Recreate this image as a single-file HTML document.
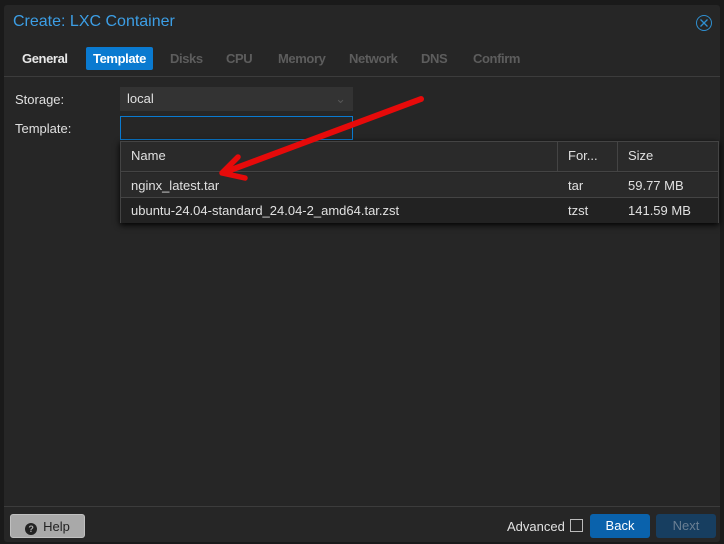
<!DOCTYPE html>
<html><head><style>
*{box-sizing:border-box;margin:0;padding:0}
body{width:724px;height:544px;background:#1a1a1a;font-family:"Liberation Sans",sans-serif;font-size:13px;color:#e0e0e0;position:relative;overflow:hidden}
.dlg{position:absolute;left:4px;top:5px;width:716px;height:537px;background:#262626;border-radius:3px}
.title{position:absolute;left:9px;top:8px;color:#3c9ee5;font-size:16px}
.close{position:absolute;left:692px;top:10px;width:16px;height:16px;border:1.3px solid #2f8fd0;border-radius:50%}
.tab{position:absolute;top:42px;height:23px;line-height:23px;padding:0 8px;color:#5d5d5d;font-weight:bold;font-size:13px;letter-spacing:-0.4px}
.panel{position:absolute;left:0;top:71px;width:716px;height:431px;border-top:1px solid #3c3c3c;border-bottom:1px solid #3c3c3c}
.lbl{position:absolute;left:11px;color:#e0e0e0}
.field{position:absolute;left:116px;width:233px;height:24px;background:#333;}
.grid{position:absolute;left:116px;top:136px;width:599px;height:82px;background:#262626;border:1px solid #444;box-shadow:0 2px 6px #000}
.row{position:absolute;left:0;width:597px;height:25px;line-height:25px}
.btn{position:absolute;top:509px;height:24px;line-height:24px;text-align:center;border-radius:3px;font-size:13px}
</style></head><body>
<div class="dlg">
<div class="title">Create: LXC Container</div>
<div class="close"><svg width="14" height="14" viewBox="0 0 14 14" style="position:absolute;left:0;top:0"><path d="M3.5 3.5L10.5 10.5M10.5 3.5L3.5 10.5" stroke="#2f8fd0" stroke-width="1.3"/></svg></div>
<div class="tab" style="left:10px;color:#e8e8e8">General</div>
<div class="tab" style="left:82px;width:67px;text-align:center;padding:0;background:#0a7ad0;color:#fff;border-radius:2px">Template</div>
<div class="tab" style="left:158px">Disks</div>
<div class="tab" style="left:214px">CPU</div>
<div class="tab" style="left:266px">Memory</div>
<div class="tab" style="left:337px">Network</div>
<div class="tab" style="left:409px">DNS</div>
<div class="tab" style="left:461px">Confirm</div>
<div class="panel"></div>
<div class="lbl" style="top:87px">Storage:</div>
<div class="field" style="top:82px;padding-left:7px;line-height:24px">local<span style="position:absolute;right:7px;top:0;color:#555">&#8964;</span></div>
<div class="lbl" style="top:116px">Template:</div>
<div class="field" style="top:111px;border:1px solid #0a7ad0;background:#262626"></div>
<div class="grid">
 <div class="row" style="top:0;height:30px;line-height:28px;background:#2a2a2a;border-bottom:1px solid #444">
  <span style="position:absolute;left:10px">Name</span>
  <span style="position:absolute;left:436px;top:0;height:29px;border-left:1px solid #444;padding-left:10px">For...</span>
  <span style="position:absolute;left:496px;top:0;height:29px;border-left:1px solid #444;padding-left:10px">Size</span>
 </div>
 <div class="row" style="top:31px;background:#2a2a2a;border-bottom:1px solid #444"><span style="position:absolute;left:10px">nginx_latest.tar</span><span style="position:absolute;left:447px">tar</span><span style="position:absolute;left:507px">59.77 MB</span></div>
 <div class="row" style="top:56px;background:#222"><span style="position:absolute;left:10px">ubuntu-24.04-standard_24.04-2_amd64.tar.zst</span><span style="position:absolute;left:447px">tzst</span><span style="position:absolute;left:507px">141.59 MB</span></div>
</div>
<svg width="724" height="544" style="position:absolute;left:-4px;top:-5px" viewBox="0 0 724 544">
<path d="M421 99L228 171" stroke="#e60a0a" stroke-width="6" stroke-linecap="round"/>
<path d="M238 157L222 173L245 178" stroke="#e60a0a" stroke-width="5.5" fill="none" stroke-linecap="round" stroke-linejoin="round"/>
</svg>
<div class="btn" style="left:6px;width:75px;background:#a9a9a9;border:1px solid #c0c0c0;color:#222"><span style="display:inline-block;width:12px;height:12px;border-radius:50%;background:#222;color:#aaa;font-size:9px;line-height:12px;font-weight:bold;vertical-align:-1px;margin-right:6px">?</span>Help</div>
<div style="position:absolute;left:503px;top:514px">Advanced</div>
<div style="position:absolute;left:566px;top:514px;width:13px;height:13px;border:1px solid #bbb"></div>
<div class="btn" style="left:586px;width:60px;background:#0a62ac;color:#fff">Back</div>
<div class="btn" style="left:652px;width:60px;background:#173e60;color:#6a7f93">Next</div>
</div>
</body></html>
